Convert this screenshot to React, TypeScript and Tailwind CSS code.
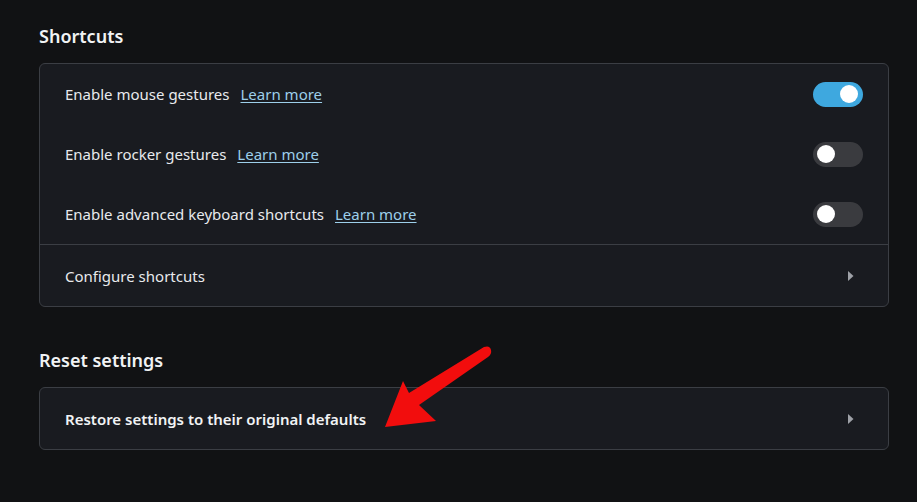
import React from "react";

const font = { fontFamily: '"Noto Sans", "Open Sans", sans-serif' };

function Toggle({ on }: { on: boolean }) {
  return (
    <div
      className={`relative h-[25px] w-[50px] rounded-full ${on ? "bg-[#3ea8df]" : "bg-[#3a3b3f]"}`}
    >
      <div
        className={`absolute top-[3.5px] h-[18px] w-[18px] rounded-full bg-white ${on ? "left-[27px]" : "left-[4px]"}`}
      />
    </div>
  );
}

function Chevron() {
  return (
    <svg width="7" height="12" viewBox="0 0 7 12" className="mr-[9px]">
      <path d="M1 1 L6.5 6 L1 11 Z" fill="#9ea1a7" />
    </svg>
  );
}

function ToggleRow({ label, on }: { label: string; on: boolean }) {
  return (
    <div className="flex h-[60px] items-center justify-between pl-[25px] pr-[25px]">
      <div className="flex items-center pt-px text-[15px] text-[#e8eaed]">
        <span>{label}</span>
        <a className="ml-[11px] text-[#9dcfea] underline underline-offset-2">Learn more</a>
      </div>
      <Toggle on={on} />
    </div>
  );
}

export default function App() {
  return (
    <div className="relative min-h-[502px] w-[917px] bg-[#111214] pt-[24px] pl-[39px]" style={font}>
      <h2 className="h-[24px] text-[18px] leading-[24px] font-semibold text-[#f1f3f4]">Shortcuts</h2>
      <div className="mt-[15px] w-[850px] rounded-[6px] border border-[#3b3e44] bg-[#191b20]">
        <ToggleRow label="Enable mouse gestures" on={true} />
        <ToggleRow label="Enable rocker gestures" on={false} />
        <ToggleRow label="Enable advanced keyboard shortcuts" on={false} />
        <div className="h-px bg-[#3b3e44]" />
        <div className="flex h-[61px] items-center justify-between pl-[25px] pr-[25px]">
          <span className="pt-px text-[15px] text-[#e8eaed]">Configure shortcuts</span>
          <Chevron />
        </div>
      </div>
      <h2 className="mt-[41px] h-[24px] text-[18px] leading-[24px] font-semibold text-[#f1f3f4]">Reset settings</h2>
      <div className="mt-[15px] w-[850px] rounded-[6px] border border-[#3b3e44] bg-[#191b20]">
        <div className="flex h-[61px] items-center justify-between pl-[25px] pr-[25px]">
          <span className="pt-px text-[15px] font-semibold text-[#f1f3f4]">Restore settings to their original defaults</span>
          <Chevron />
        </div>
      </div>
      <svg className="pointer-events-none absolute left-0 top-0" width="917" height="502">
        <path
          d="M385 427 L403 381 L409 393 L484 347 Q490 345 491 350 Q492 354 488 357 L419 405 L436 421 Z"
          fill="#f20d0d"
        />
      </svg>
    </div>
  );
}
